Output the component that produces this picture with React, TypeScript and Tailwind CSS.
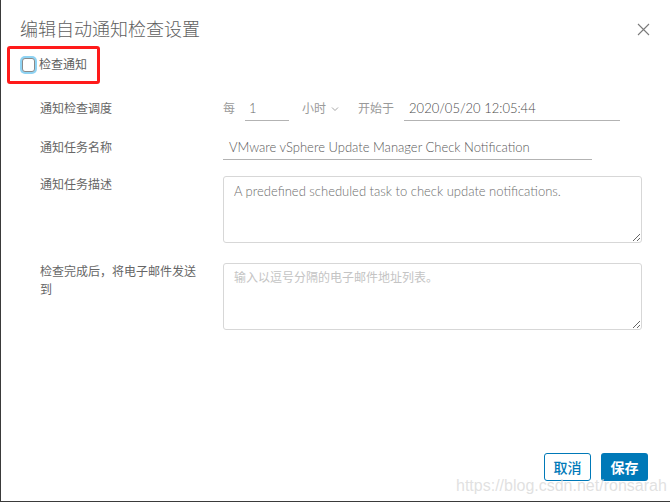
import React from "react";

const font = { fontFamily: '"Lato", "Noto Sans CJK SC", sans-serif' };

export default function App() {
  return (
    <div
      className="relative w-[670px] h-[502px] bg-white border-l border-b border-[#3a3a3a] overflow-hidden flex flex-col text-[#666666]"
      style={font}
    >
      {/* Header */}
      <div className="flex items-center justify-between pl-[19px] pr-[20px] pt-[16px]">
        <h1 className="text-[18px] leading-[26px] font-light text-[#5e5e5e]">编辑自动通知检查设置</h1>
        <svg width="13" height="13" viewBox="0 0 13 13" className="text-[#7a7a7a]">
          <path d="M1 1 L12 12 M12 1 L1 12" stroke="currentColor" strokeWidth="1.1" fill="none" />
        </svg>
      </div>

      {/* Highlighted checkbox */}
      <div className="ml-[6px] mt-[4px] w-[93px] h-[38px] border-[3px] border-[#ff1a1a] rounded-[3px] flex items-center pl-[12px] gap-[4px]">
        <span className="w-[13px] h-[14px] rounded-[3px] border border-[#8a8a8a] bg-white shadow-[0_0_0_2px_#8fd3f3]" />
        <span className="text-[12px] leading-[18px] text-[#5e5e5e]">检查通知</span>
      </div>

      {/* Form */}
      <div className="flex flex-col pl-[39px] mt-[13px]">
        {/* Row 1 */}
        <div className="flex items-center h-[24px]">
          <div className="w-[183px] text-[12px] leading-[18px]">通知检查调度</div>
          <span className="text-[12px] text-[#9a9a9a]">每</span>
          <div className="ml-[10px] w-[44px] h-[24px] border-b border-[#b3b3b3] flex items-center pl-[4px] text-[13px] font-light text-[#6a6a6a]">1</div>
          <div className="ml-[13px] flex items-center gap-[5px] text-[12px] text-[#9a9a9a]">
            <span>小时</span>
            <svg width="8" height="6" viewBox="0 0 8 6">
              <path d="M1 1.5 L4 4.5 L7 1.5" stroke="#a5a5a5" strokeWidth="1" fill="none" />
            </svg>
          </div>
          <span className="ml-[19px] text-[12px] text-[#9a9a9a]">开始于</span>
          <div className="ml-[10px] w-[216px] h-[24px] border-b border-[#b3b3b3] flex items-center pl-[5px] text-[13px] font-light text-[#4a4a4a]">
            2020/05/20 12:05:44
          </div>
        </div>

        {/* Row 2 */}
        <div className="flex items-center h-[24px] mt-[15px]">
          <div className="w-[183px] text-[12px] leading-[18px]">通知任务名称</div>
          <div className="w-[369px] h-[24px] border-b border-[#b3b3b3] flex items-center pl-[6px] text-[13px] font-light text-[#5a5a5a]">
            VMware vSphere Update Manager Check Notification
          </div>
        </div>

        {/* Row 3 */}
        <div className="flex items-start mt-[16px]">
          <div className="w-[183px] text-[12px] leading-[18px]">通知任务描述</div>
          <textarea
            readOnly
            defaultValue="A predefined scheduled task to check update notifications."
            className="w-[419px] h-[67px] border border-[#d7d7d7] rounded-[3px] px-[10px] py-[5px] text-[13px] leading-[18px] font-light text-[#6e6e6e] outline-none"
            style={font}
          />
        </div>

        {/* Row 4 */}
        <div className="flex items-start mt-[20px]">
          <div className="w-[183px] text-[12px] leading-[18px] pr-[20px]">检查完成后，将电子邮件发送到</div>
          <textarea
            readOnly
            placeholder="输入以逗号分隔的电子邮件地址列表。"
            className="w-[419px] h-[67px] border border-[#d7d7d7] rounded-[3px] px-[10px] py-[5px] text-[12px] leading-[18px] text-[#8c8c8c] placeholder:text-[#c4c4c4] outline-none"
            style={font}
          />
        </div>
      </div>

      {/* Footer */}
      <div className="mt-auto flex justify-end gap-[10px] pr-[22px] pb-[20px]">
        <button className="w-[47px] h-[28px] border border-[#0079b8] rounded-[3px] text-[#0079b8] text-[14px] font-medium bg-white">
          取消
        </button>
        <button className="w-[47px] h-[28px] rounded-[3px] bg-[#0079b8] text-white text-[14px] font-bold">
          保存
        </button>
      </div>

      {/* Watermark */}
      <div
        className="absolute left-[455px] top-[476px] text-[16px] leading-[20px] text-[#d9d9d9]/80 pointer-events-none whitespace-nowrap"
        style={{ fontFamily: '"Liberation Sans", Arial, sans-serif' }}
      >
        https://blog.csdn.net/ronsarah
      </div>
    </div>
  );
}
